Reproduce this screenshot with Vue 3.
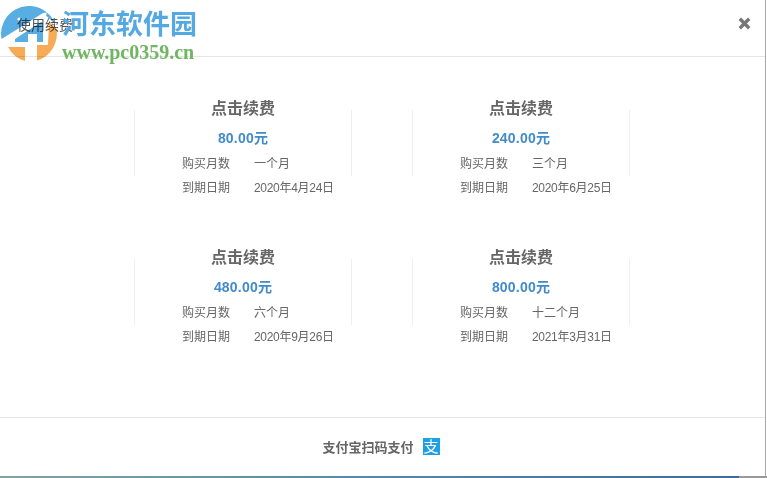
<script setup>
const plans = [
  { price: '80.00元', months: '一个月', date: '2020年4月24日' },
  { price: '240.00元', months: '三个月', date: '2020年6月25日' },
  { price: '480.00元', months: '六个月', date: '2020年9月26日' },
  { price: '800.00元', months: '十二个月', date: '2021年3月31日' },
]
</script>

<template>
  <div class="page">
    <div class="dialog">
      <header class="head">
        <span class="head-title">使用续费</span>
        <span class="close" aria-label="关闭">
          <svg width="13" height="13" viewBox="0 0 13 13">
            <path d="M1.8 1.8 11.2 11.2M11.2 1.8 1.8 11.2" stroke="#777" stroke-width="3.4" fill="none" />
          </svg>
        </span>
      </header>

      <main class="plans">
        <section v-for="p in plans" :key="p.price" class="plan">
          <h3 class="plan-title">点击续费</h3>
          <div class="price">{{ p.price }}</div>
          <dl class="row">
            <dt>购买月数</dt>
            <dd>{{ p.months }}</dd>
          </dl>
          <dl class="row">
            <dt>到期日期</dt>
            <dd class="date">{{ p.date }}</dd>
          </dl>
        </section>
      </main>

      <footer class="foot">
        <span class="foot-text">支付宝扫码支付</span>
        <span class="alipay">支</span>
      </footer>
    </div>
    <div class="strip"><span class="strip-end"></span></div>

    <div class="watermark">
      <svg class="wm-logo" width="60" height="60" viewBox="0 6 60 60">
        <path d="M1.5 39A28 28 0 0 1 47 12.5L43 13 8 35Z" fill="#58ade3" />
        <path d="M47 12.5A28 28 0 0 1 55 24L46 15.5Z" fill="#58ade3" />
        <circle cx="19" cy="19" r="1.6" fill="#fff" />
        <path d="M15 42V39L41 22 43 23V42H37V34H28V42Z" fill="#58ade3" />
        <path d="M49 22 56.5 29A28 28 0 0 1 37 60.5V45H48Z" fill="#f8ab57" />
        <path d="M8 47H25V61A28 28 0 0 1 8 47Z" fill="#f8ab57" />
      </svg>
      <div class="wm-text">
        <div class="wm-cn">河东软件园</div>
        <div class="wm-url">www.pc0359.cn</div>
      </div>
    </div>
  </div>
</template>

<style>
html, body { margin: 0; background: #fff; }
</style>

<style scoped>
.page {
  position: relative;
  width: 767px;
  height: 478px;
  overflow: hidden;
  background: #fff;
  font-family: "Liberation Sans", "Noto Sans CJK SC", sans-serif;
  color: #666;
}
.dialog {
  height: 476px;
  box-sizing: border-box;
  border-right: 1px solid #a8a8a8;
  margin-right: 1px;
  display: flex;
  flex-direction: column;
}
.head {
  flex: none;
  height: 39px;
  border-bottom: 1px solid #e5e5e5;
  display: flex;
  align-items: flex-start;
  justify-content: space-between;
  padding: 17px 14px 0 17px;
}
.head-title { font-size: 14px; line-height: 16px; color: #555; }
.close { width: 13px; height: 13px; display: block; margin-top: -1px; }
.plans {
  flex: 1;
  display: grid;
  grid-template-columns: 218px 218px;
  grid-auto-rows: 66px;
  column-gap: 60px;
  row-gap: 83px;
  padding: 53px 0 0 134px;
  align-content: start;
}
.plan {
  box-sizing: border-box;
  height: 66px;
  border-left: 1px solid #efefef;
  border-right: 1px solid #efefef;
  text-align: center;
}
.plan-title {
  margin: -12px 0 0;
  font-size: 16px;
  line-height: 22px;
  font-weight: 700;
  color: #666;
}
.price {
  margin-top: 8px;
  font-size: 14px;
  line-height: 20px;
  font-weight: 700;
  letter-spacing: 0.2px;
  color: #428bca;
}
.row {
  display: flex;
  margin: 0;
  padding-left: 47px;
  height: 24px;
  align-items: center;
  font-size: 12px;
  text-align: left;
  color: #666;
}
.price + .row { margin-top: 2px; }
.row dt { width: 72px; flex: none; }
.row dd { margin: 0; white-space: nowrap; }
.row .date { letter-spacing: -0.3px; }
.foot {
  height: 56px;
  flex: none;
  border-top: 1px solid #e5e5e5;
  display: flex;
  align-items: center;
  justify-content: center;
  gap: 9px;
  padding: 0 3px 2px 0;
}
.foot-text { font-size: 13px; font-weight: 700; color: #666; }
.alipay {
  width: 17px;
  height: 17px;
  background: #1fa0e3;
  color: #fff;
  font-size: 15px;
  line-height: 17px;
  text-align: center;
  display: block;
  margin-top: 1px;
}
.strip {
  height: 2px;
  display: flex;
  background: linear-gradient(90deg, #7fa5a0 0%, #5b8aa6 45%, #3e6c97 96%);
}
.strip-end { margin-left: auto; width: 28px; background: #9a9a9a; }
.watermark {
  position: absolute;
  left: 0;
  top: 6px;
  display: flex;
  gap: 2px;
  pointer-events: none;
}
.wm-logo { mix-blend-mode: multiply; }
.wm-text { margin-top: 2px; }
.wm-cn {
  font-family: "Liberation Serif", "Noto Sans CJK SC", serif;
  font-size: 27px;
  line-height: 34px;
  font-weight: 700;
  color: #55a9e2;
  white-space: nowrap;
}
.wm-url {
  font-family: "Liberation Serif", serif;
  font-size: 20px;
  line-height: 20px;
  font-weight: 700;
  color: #70b561;
  white-space: nowrap;
}
</style>
